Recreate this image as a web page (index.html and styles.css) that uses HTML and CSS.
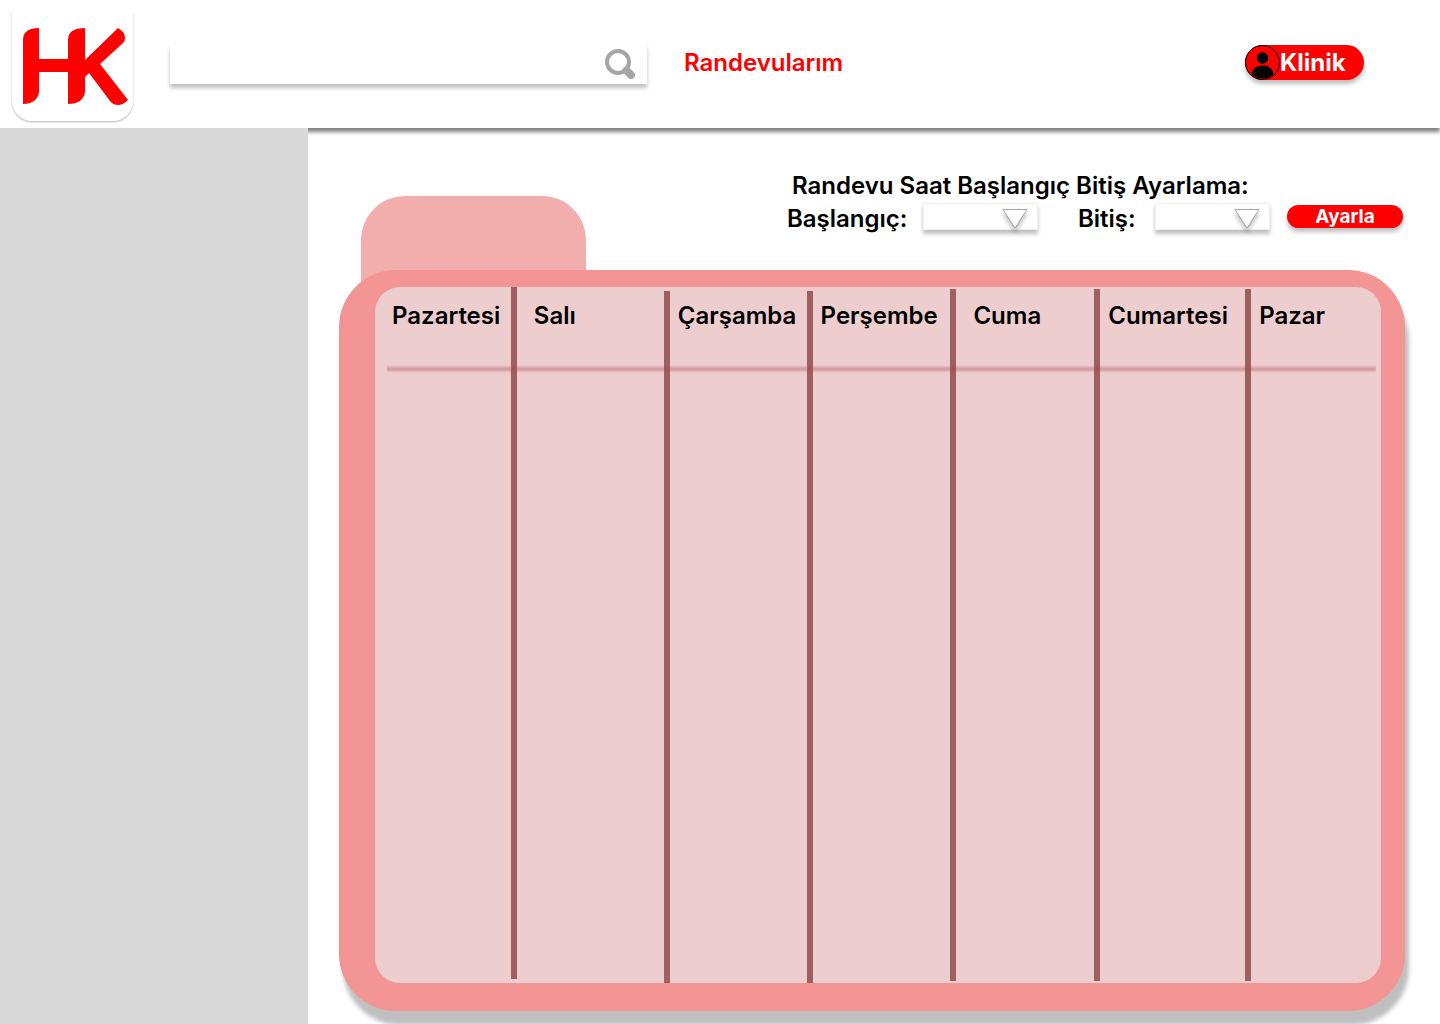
FILE: index.html
```html
<!DOCTYPE html>
<html lang="tr">
<head>
<meta charset="utf-8">
<meta name="viewport" content="width=device-width, initial-scale=1">
<title>Randevularım</title>
<link rel="stylesheet" href="styles.css">
</head>
<body>
<header class="topbar">
  <a class="logo" href="#" aria-label="HK">
    <svg viewBox="0 0 121 109" aria-hidden="true">
      <path d="M11 92V28q0-12 16-12v31H56V28q0-12 17-12v32L106 16q7 4 7 10q0 3-2 5L88 52L116 88q-5 5-10 5q-5 0-8-4L77 61L73 65V80q-2 12-17 12V60H27V80q-2 12-16 12Z"/>
    </svg>
  </a>
  <form class="search" role="search">
    <input class="search-input" type="search" aria-label="Ara">
    <button class="search-button" type="button" aria-label="Ara">
      <svg viewBox="0 0 30 30" aria-hidden="true">
        <circle cx="13" cy="13" r="11" fill="none" stroke="#a6a6a6" stroke-width="4"/>
        <path d="M21.500 21.500L26 26" stroke="#a6a6a6" stroke-width="8" stroke-linecap="round"/>
      </svg>
    </button>
  </form>
  <nav class="nav"><a class="nav-link" href="#">Randevularım</a></nav>
  <button class="account" type="button">
    <svg viewBox="0 0 35 35" aria-hidden="true">
      <circle cx="17.5" cy="17.5" r="17" fill="#f00" stroke="#000"/>
      <circle cx="17.5" cy="13" r="5.7"/>
      <path d="M6.500 29.500C7 23.500 12 20.500 17.500 20.500S28 23.500 28.500 29.500A17 17 0 0 1 6.500 29.500Z"/>
    </svg>
    <span>Klinik</span>
  </button>
</header>
<div class="layout">
  <aside class="sidebar"></aside>
  <main class="content">
    <div class="upper">
      <div class="tab"></div>
      <form class="hours">
        <h1 class="hours-title">Randevu Saat Başlangıç Bitiş Ayarlama:</h1>
        <div class="hours-row">
          <label class="hours-label" for="start">Başlangıç:</label>
          <div class="picker">
            <select class="picker-select" id="start"><option></option></select>
            <svg class="picker-arrow" viewBox="0 0 26 20" aria-hidden="true"><path d="M1 .5H25L13 19Z"/></svg>
          </div>
          <label class="hours-label" for="end">Bitiş:</label>
          <div class="picker">
            <select class="picker-select" id="end"><option></option></select>
            <svg class="picker-arrow" viewBox="0 0 26 20" aria-hidden="true"><path d="M1 .5H25L13 19Z"/></svg>
          </div>
          <button class="apply" type="button">Ayarla</button>
        </div>
      </form>
    </div>
    <section class="folder">
      <table class="week">
        <colgroup>
          <col class="day day-mon">
          <col class="day day-tue">
          <col class="day day-wed">
          <col class="day day-thu">
          <col class="day day-fri">
          <col class="day day-sat">
          <col class="day-sun">
        </colgroup>
        <thead>
          <tr><th scope="col">Pazartesi</th><th scope="col">Salı</th><th scope="col" class="tight">Çarşamba</th><th scope="col" class="tight">Perşembe</th><th scope="col">Cuma</th><th scope="col" class="tight">Cumartesi</th><th scope="col" class="tight">Pazar</th></tr>
        </thead>
        <tbody>
          <tr><td></td><td></td><td></td><td></td><td></td><td></td><td></td></tr>
        </tbody>
      </table>
    </section>
  </main>
</div>
</body>
</html>
```
FILE: styles.css
```css
* { box-sizing: border-box; }

body {
  margin: 0;
  min-height: 100vh;
  display: flex;
  flex-direction: column;
  background: #fff;
  color: #000;
  font-family: Inter, "Noto Sans", sans-serif;
  font-size: 24px;
  font-weight: 600;
  line-height: 32px;
}

button, input, select { font: inherit; border: 0; padding: 0; margin: 0; }
button { cursor: pointer; }
svg { display: block; }

/* Top bar */
.topbar {
  position: relative;
  display: flex;
  align-items: flex-start;
  height: 128px;
  padding: 2px 76px 0 12px;
  background: #fff;
  box-shadow: 0 4px 4px rgba(0, 0, 0, .5);
}
.logo {
  width: 121px;
  height: 109px;
  margin: 10px 37px 0 0;
  border-radius: 0 0 20px 20px;
  background: #fff;
  box-shadow: 0 1px 2px rgba(0, 0, 0, .3);
  clip-path: inset(0 -4px -4px);
}
.logo svg { width: 100%; height: 100%; fill: #f00; }
.search {
  display: flex;
  align-items: center;
  flex: 0 1 477px;
  height: 40px;
  margin-top: 42px;
  padding-right: 12px;
  background: #fff;
  box-shadow: 0 4px 4px rgba(0, 0, 0, .25);
}
.search-input {
  flex: 1;
  min-width: 0;
  height: 100%;
  padding: 0 12px;
  background: none;
  outline: none;
}
.search-button { width: 30px; height: 30px; background: none; }
.nav { margin: 45px 0 0 37px; }
.nav-link { color: #f00; text-decoration: none; }
.account {
  display: flex;
  align-items: center;
  width: 119px;
  height: 35px;
  margin: 43px 0 0 auto;
  border-radius: 18px;
  background: #f00;
  color: #fff;
  font-weight: 700;
  box-shadow: 0 4px 4px rgba(0, 0, 0, .25);
}
.account svg { width: 35px; height: 35px; }

/* Page body */
.layout { display: flex; flex: 1; }
.sidebar {
  position: relative;
  flex: 0 0 308px;
  background: #d9d9d9;
}
.content {
  flex: 1;
  min-width: 0;
  display: flex;
  flex-direction: column;
  padding: 42px 35px 13px 31px;
}
.upper {
  display: flex;
  justify-content: space-between;
  align-items: flex-start;
  height: 100px;
  padding-left: 22px;
}
.tab {
  width: 225px;
  height: 140px;
  margin-top: 26px;
  border-radius: 44px 44px 0 0;
  background: #f2adad;
}

/* Appointment hours */
.hours-title {
  margin: 0 0 0 5px;
  font: inherit;
  white-space: nowrap;
}
.hours-row {
  display: flex;
  align-items: flex-start;
  margin-right: 2px;
}
.hours-label { width: 77px; padding-top: 1px; }
.hours-label:first-child { width: 136px; }
.picker {
  position: relative;
  display: flex;
  width: 115px;
  height: 27px;
  margin: 1px 17px 0 0;
  background: #fff;
  border: 1px solid #f0f0f0;
  box-shadow: 0 4px 4px rgba(0, 0, 0, .25);
}
.picker:nth-child(2) { margin-right: 40px; }
.picker-select {
  width: 100%;
  appearance: none;
  background: none;
}
.picker-arrow {
  position: absolute;
  right: 9px;
  top: 5px;
  width: 26px;
  height: 20px;
  fill: #fff;
  stroke: #a6a6a6;
  pointer-events: none;
  filter: drop-shadow(0 4px 2px rgba(0, 0, 0, .25));
}
.apply {
  width: 116px;
  height: 23px;
  margin-top: 3px;
  border-radius: 12px;
  background: #f00;
  color: #fff;
  font-size: 19px;
  font-weight: 700;
  line-height: 23px;
  box-shadow: 0 4px 4px rgba(0, 0, 0, .25);
}

/* Weekly folder */
.folder {
  position: relative;
  flex: 1;
  display: flex;
  min-height: 400px;
  padding: 17px 24px 28px 36px;
  border-radius: 57px;
  background: #f39594;
  box-shadow: 4px 14px 4px rgba(0, 0, 0, .25);
}
.week {
  width: 100%;
  table-layout: fixed;
  border-collapse: separate;
  border-spacing: 0;
  border-radius: 25px;
  background: #eecdcf;
}
.day {
  background: linear-gradient(#9f5f5f, #9f5f5f) right 2px / 6px calc(100% - 4px) no-repeat;
}
.day-mon { width: 14.1%; background-position: right 0; }
.day-tue { width: 15.2%; background-position: right 100%; }
.day-wed { width: 14.2%; background-position: right 100%; }
.day-thu { width: 14.3%; }
.day-fri { width: 14.3%; }
.day-sat { width: 15%; }
.week thead tr {
  background: linear-gradient(rgba(159, 72, 72, 0), rgba(159, 72, 72, .4), rgba(159, 72, 72, 0)) 12px 100% / calc(100% - 17px) 8px no-repeat;
}
.week th {
  height: 86px;
  padding: 13px 0 0 17px;
  text-align: left;
  vertical-align: top;
  font-weight: 600;
}
.week .tight { padding-left: 8px; }
.week td { padding: 0; }
```
